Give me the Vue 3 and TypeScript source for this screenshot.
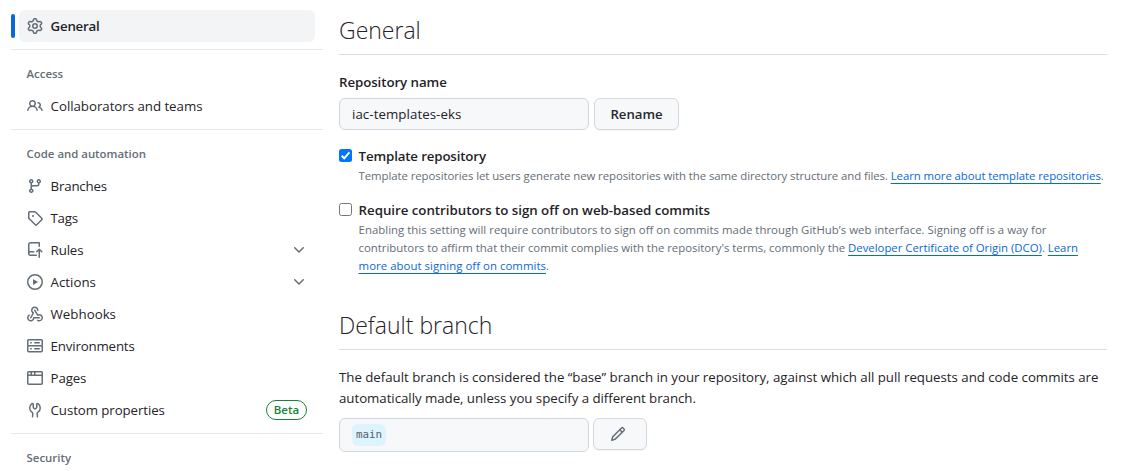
<script setup lang="ts">
interface NavItem {
  label: string
  icon: string
  fit: string
  expandable?: boolean
  badge?: string
}
interface NavSection {
  title: string
  fit: string
  items: NavItem[]
}

const gear = 'M8 0a8.2 8.2 0 0 1 .701.031C9.444.095 9.99.645 10.16 1.29l.288 1.107c.018.066.079.158.212.224.231.114.454.243.668.386.123.082.233.09.299.071l1.103-.303c.644-.176 1.392.021 1.82.63.27.385.506.792.704 1.218.315.675.111 1.422-.364 1.891l-.814.806c-.049.048-.098.147-.088.294.016.257.016.515 0 .772-.01.147.038.246.088.294l.814.806c.475.469.679 1.216.364 1.891a7.977 7.977 0 0 1-.704 1.217c-.428.61-1.176.807-1.82.63l-1.102-.302c-.067-.019-.177-.011-.3.071a5.909 5.909 0 0 1-.668.386c-.133.066-.194.158-.211.224l-.29 1.106c-.168.646-.715 1.196-1.458 1.26a8.006 8.006 0 0 1-1.402 0c-.743-.064-1.289-.614-1.458-1.26l-.289-1.106c-.018-.066-.079-.158-.212-.224a5.738 5.738 0 0 1-.668-.386c-.123-.082-.233-.09-.299-.071l-1.103.303c-.644.176-1.392-.021-1.82-.63a8.12 8.12 0 0 1-.704-1.218c-.315-.675-.111-1.422.363-1.891l.815-.806c.05-.048.098-.147.088-.294a6.214 6.214 0 0 1 0-.772c.01-.147-.038-.246-.088-.294l-.815-.806C.635 6.045.431 5.298.746 4.623a7.92 7.92 0 0 1 .704-1.217c.428-.61 1.176-.807 1.82-.63l1.102.302c.067.019.177.011.3-.071.214-.143.437-.272.668-.386.133-.066.194-.158.211-.224l.29-1.106C6.009.645 6.556.095 7.299.03 7.53.01 7.764 0 8 0Zm-.571 1.525c-.036.003-.108.036-.137.146l-.289 1.105c-.147.561-.549.967-.998 1.189-.173.086-.34.183-.5.29-.417.278-.97.423-1.529.27l-1.103-.303c-.109-.03-.175.016-.195.045-.22.312-.412.644-.573.99-.014.031-.021.11.059.19l.815.806c.411.406.562.957.53 1.456a4.709 4.709 0 0 0 0 .582c.032.499-.119 1.05-.53 1.456l-.815.806c-.081.08-.073.159-.059.19.162.346.353.677.573.989.02.03.085.076.195.046l1.102-.303c.56-.153 1.113-.008 1.53.27.161.107.328.204.501.29.447.222.85.629.997 1.189l.289 1.105c.029.109.101.143.137.146a6.6 6.6 0 0 0 1.142 0c.036-.003.108-.036.137-.146l.289-1.105c.147-.561.549-.967.998-1.189.173-.086.34-.183.5-.29.417-.278.97-.423 1.529-.27l1.103.303c.109.029.175-.016.195-.045.22-.313.411-.644.573-.99.014-.031.021-.11-.059-.19l-.815-.806c-.411-.406-.562-.957-.53-1.456a4.709 4.709 0 0 0 0-.582c-.032-.499.119-1.05.53-1.456l.815-.806c.081-.08.073-.159.059-.19a6.464 6.464 0 0 0-.573-.989c-.02-.03-.085-.076-.195-.046l-1.102.303c-.56.153-1.113.008-1.53-.27a4.44 4.44 0 0 0-.501-.29c-.447-.222-.85-.629-.997-1.189l-.289-1.105c-.029-.11-.101-.143-.137-.146a6.6 6.6 0 0 0-1.142 0ZM11 8a3 3 0 1 1-6 0 3 3 0 0 1 6 0ZM9.5 8a1.5 1.5 0 1 0-3.001.001A1.5 1.5 0 0 0 9.5 8Z'
const people = 'M2 5.5a3.5 3.5 0 1 1 5.898 2.549 5.508 5.508 0 0 1 3.034 4.084.75.75 0 1 1-1.482.235 4 4 0 0 0-7.9 0 .75.75 0 0 1-1.482-.236A5.507 5.507 0 0 1 3.102 8.05 3.493 3.493 0 0 1 2 5.5ZM11 4a3.001 3.001 0 0 1 2.22 5.018 5.01 5.01 0 0 1 2.56 3.012.749.749 0 0 1-.885.954.752.752 0 0 1-.549-.514 3.507 3.507 0 0 0-2.522-2.372.75.75 0 0 1-.574-.73v-.352a.75.75 0 0 1 .416-.672A1.5 1.5 0 0 0 11 5.5.75.75 0 0 1 11 4Zm-5.5-.5a2 2 0 1 0-.001 3.999A2 2 0 0 0 5.5 3.5Z'
const branch = 'M9.5 3.25a2.25 2.25 0 1 1 3 2.122V6A2.5 2.5 0 0 1 10 8.5H6a1 1 0 0 0-1 1v1.128a2.251 2.251 0 1 1-1.5 0V5.372a2.25 2.25 0 1 1 1.5 0v1.836A2.493 2.493 0 0 1 6 7h4a1 1 0 0 0 1-1v-.628A2.25 2.25 0 0 1 9.5 3.25Zm-6 0a.75.75 0 1 0 1.5 0 .75.75 0 0 0-1.5 0Zm8.25-.75a.75.75 0 1 0 0 1.5.75.75 0 0 0 0-1.5ZM4.25 12a.75.75 0 1 0 0 1.5.75.75 0 0 0 0-1.5Z'
const tag = 'M1 7.775V2.75C1 1.784 1.784 1 2.75 1h5.025c.464 0 .91.184 1.238.513l6.25 6.25a1.75 1.75 0 0 1 0 2.474l-5.026 5.026a1.75 1.75 0 0 1-2.474 0l-6.25-6.25A1.752 1.752 0 0 1 1 7.775Zm1.5 0c0 .066.026.13.073.177l6.25 6.25a.25.25 0 0 0 .354 0l5.025-5.025a.25.25 0 0 0 0-.354l-6.25-6.25a.25.25 0 0 0-.177-.073H2.75a.25.25 0 0 0-.25.25ZM6 5a1 1 0 1 1 0 2 1 1 0 0 1 0-2Z'
const repoPush = 'M1 2.5A2.5 2.5 0 0 1 3.5 0h8.75a.75.75 0 0 1 .75.75v3.5a.75.75 0 0 1-1.5 0V1.5h-8a1 1 0 0 0-1 1v6.708A2.493 2.493 0 0 1 3.5 9h3.25a.75.75 0 0 1 0 1.5H3.5a1 1 0 0 0 0 2h5.75a.75.75 0 0 1 0 1.5H3.5A2.5 2.5 0 0 1 1 11.5Zm13.23 7.79h-.001l-1.224-1.224v6.184a.75.75 0 0 1-1.5 0V9.066L10.28 10.29a.75.75 0 0 1-1.06-1.061l2.505-2.504a.75.75 0 0 1 1.06 0L15.29 9.23a.751.751 0 0 1-.018 1.042.751.751 0 0 1-1.042.018Z'
const play = 'M8 0a8 8 0 1 1 0 16A8 8 0 0 1 8 0ZM1.5 8a6.5 6.5 0 1 0 13 0 6.5 6.5 0 0 0-13 0Zm4.879-2.773 4.264 2.559a.25.25 0 0 1 0 .428l-4.264 2.559A.25.25 0 0 1 6 10.559V5.442a.25.25 0 0 1 .379-.215Z'
const webhook = 'M5.5 4.25a2.25 2.25 0 0 1 4.5 0 .75.75 0 0 0 1.5 0 3.75 3.75 0 1 0-6.14 2.889l-2.272 4.258a.75.75 0 0 0 1.324.706L7 7.25a.75.75 0 0 0-.309-1.015A2.25 2.25 0 0 1 5.5 4.25Z M7.364 3.607a.75.75 0 0 1 1.03.257l2.608 4.349a3.75 3.75 0 1 1-.628 6.785.75.75 0 0 1 .752-1.299 2.25 2.25 0 1 0-.033-3.88.75.75 0 0 1-1.03-.256L7.107 4.636a.75.75 0 0 1 .257-1.03Z M2.9 8.776A.75.75 0 0 1 2.625 9.8 2.25 2.25 0 1 0 6 11.75a.75.75 0 0 1 .75-.751h5.5a.75.75 0 0 1 0 1.5H7.425a3.751 3.751 0 1 1-5.55-3.998.75.75 0 0 1 1.024.274Z'
const server = 'M1.75 1h12.5c.966 0 1.75.784 1.75 1.75v4c0 .372-.116.717-.314 1 .198.283.314.628.314 1v4a1.75 1.75 0 0 1-1.75 1.75H1.75A1.75 1.75 0 0 1 0 12.75v-4c0-.358.109-.707.314-1a1.739 1.739 0 0 1-.314-1v-4C0 1.784.784 1 1.75 1ZM1.5 2.75v4c0 .138.112.25.25.25h12.5a.25.25 0 0 0 .25-.25v-4a.25.25 0 0 0-.25-.25H1.75a.25.25 0 0 0-.25.25Zm.25 5.75a.25.25 0 0 0-.25.25v4c0 .138.112.25.25.25h12.5a.25.25 0 0 0 .25-.25v-4a.25.25 0 0 0-.25-.25ZM7 4.75A.75.75 0 0 1 7.75 4h4.5a.75.75 0 0 1 0 1.5h-4.5A.75.75 0 0 1 7 4.75ZM7.75 10h4.5a.75.75 0 0 1 0 1.5h-4.5a.75.75 0 0 1 0-1.5ZM3 4.75A.75.75 0 0 1 3.75 4h.5a.75.75 0 0 1 0 1.5h-.5A.75.75 0 0 1 3 4.75ZM3.75 10h.5a.75.75 0 0 1 0 1.5h-.5a.75.75 0 0 1 0-1.5Z'
const browser = 'M0 2.75C0 1.784.784 1 1.75 1h12.5c.966 0 1.75.784 1.75 1.75v10.5A1.75 1.75 0 0 1 14.25 15H1.75A1.75 1.75 0 0 1 0 13.25ZM14.5 6h-13v7.25c0 .138.112.25.25.25h12.5a.25.25 0 0 0 .25-.25Zm-6-3.5v2h6V2.75a.25.25 0 0 0-.25-.25ZM5 2.5v2h2v-2Zm-3.25 0a.25.25 0 0 0-.25.25V4.5h2v-2Z'
const tools = 'M5.433 2.304A4.492 4.492 0 0 0 3.5 6c0 1.598.832 3.002 2.09 3.802.518.328.929.923.902 1.64v.008l-.164 3.337a.75.75 0 1 1-1.498-.073l.163-3.33c.002-.085-.05-.216-.207-.316A5.996 5.996 0 0 1 2 6a5.993 5.993 0 0 1 2.567-4.92 1.482 1.482 0 0 1 1.673-.04c.462.296.76.827.76 1.423v2.82c0 .082.041.16.11.206l.75.51a.25.25 0 0 0 .28 0l.75-.51A.249.249 0 0 0 9 5.282V2.463c0-.596.298-1.127.76-1.423a1.482 1.482 0 0 1 1.673.04A5.993 5.993 0 0 1 14 6a5.996 5.996 0 0 1-2.786 5.068c-.157.1-.209.23-.207.315l.163 3.33a.752.752 0 0 1-1.094.714.75.75 0 0 1-.404-.64l-.164-3.345c-.027-.717.384-1.312.902-1.64A4.495 4.495 0 0 0 12.5 6a4.492 4.492 0 0 0-1.933-3.696c-.024.017-.067.067-.067.16v2.818a1.75 1.75 0 0 1-.767 1.448l-.75.51a1.75 1.75 0 0 1-1.966 0l-.75-.51A1.75 1.75 0 0 1 5.5 5.282V2.463c0-.092-.043-.142-.067-.159Z'
const chevron = 'M12.78 5.22a.749.749 0 0 1 0 1.06l-4.25 4.25a.749.749 0 0 1-1.06 0L3.22 6.28a.749.749 0 1 1 1.06-1.06L8 8.939l3.72-3.719a.749.749 0 0 1 1.06 0Z'
const pencil = 'M11.013 1.427a1.75 1.75 0 0 1 2.474 0l1.086 1.086a1.75 1.75 0 0 1 0 2.474l-8.61 8.61c-.21.21-.47.364-.756.445l-3.251.93a.75.75 0 0 1-.927-.928l.929-3.25c.081-.286.235-.547.445-.758l8.61-8.61Zm.176 4.823L9.75 4.81l-6.286 6.287a.253.253 0 0 0-.064.108l-.558 1.953 1.953-.558a.253.253 0 0 0 .108-.064Zm1.238-3.763a.25.25 0 0 0-.354 0L10.811 3.75l1.439 1.44 1.263-1.263a.25.25 0 0 0 0-.354Z'

const sections: NavSection[] = [
  {
    title: 'Access',
    fit: 'fit-access',
    items: [{ label: 'Collaborators and teams', icon: people, fit: 'fit-collab' }],
  },
  {
    title: 'Code and automation',
    fit: 'fit-code',
    items: [
      { label: 'Branches', icon: branch, fit: 'fit-branches' },
      { label: 'Tags', icon: tag, fit: 'fit-tags' },
      { label: 'Rules', icon: repoPush, fit: 'fit-rules', expandable: true },
      { label: 'Actions', icon: play, fit: 'fit-actions', expandable: true },
      { label: 'Webhooks', icon: webhook, fit: 'fit-webhooks' },
      { label: 'Environments', icon: server, fit: 'fit-env' },
      { label: 'Pages', icon: browser, fit: 'fit-pages' },
      { label: 'Custom properties', icon: tools, fit: 'fit-custom', badge: 'Beta' },
    ],
  },
  { title: 'Security', fit: 'fit-security', items: [] },
]
</script>

<template>
  <div class="page">
    <nav class="sidebar">
      <a class="item active">
        <svg class="icon" viewBox="0 0 16 16"><path :d="gear" /></svg>
        <span class="fit-general">General</span>
      </a>
      <section v-for="s in sections" :key="s.title" class="group">
        <h3 class="group-title"><span :class="s.fit">{{ s.title }}</span></h3>
        <a v-for="i in s.items" :key="i.label" class="item">
          <svg class="icon" viewBox="0 0 16 16"><path :d="i.icon" /></svg>
          <span :class="i.fit">{{ i.label }}</span>
          <svg v-if="i.expandable" class="icon trailing" viewBox="0 0 16 16"><path :d="chevron" /></svg>
          <span v-if="i.badge" class="badge trailing">{{ i.badge }}</span>
        </a>
      </section>
    </nav>

    <main class="content">
      <h2 class="heading"><span class="fit-h-general">General</span></h2>
      <label class="field-label"><span class="fit-reponame">Repository name</span></label>
      <div class="row">
        <div class="input"><span class="fit-iac">iac-templates-eks</span></div>
        <button class="btn rename">Rename</button>
      </div>

      <div class="option first">
        <span class="check checked">
          <svg viewBox="0 0 13 13"><path d="M2.7 6.8 5.2 9.3 10.4 3.4" /></svg>
        </span>
        <div class="option-body">
          <div class="option-title"><span class="fit-template">Template repository</span></div>
          <p class="note">
            <span class="line fit-n1">Template repositories let users generate new repositories with the same directory structure and files. <a class="link">Learn more about template repositories</a>.</span>
          </p>
        </div>
      </div>
      <div class="option">
        <span class="check"></span>
        <div class="option-body">
          <div class="option-title"><span class="fit-require">Require contributors to sign off on web-based commits</span></div>
          <p class="note">
            <span class="line fit-n2">Enabling this setting will require contributors to sign off on commits made through GitHub’s web interface. Signing off is a way for</span>
            <span class="line fit-n3">contributors to affirm that their commit complies with the repository's terms, commonly the <a class="link">Developer Certificate of Origin (DCO)</a>. <a class="link">Learn</a></span>
            <span class="line fit-n4"><a class="link">more about signing off on commits</a>.</span>
          </p>
        </div>
      </div>

      <h2 class="heading second"><span class="fit-h-default">Default branch</span></h2>
      <p class="body-text">
        <span class="line fit-b1">The default branch is considered the “base” branch in your repository, against which all pull requests and code commits are</span>
        <span class="line fit-b2">automatically made, unless you specify a different branch.</span>
      </p>
      <div class="row branch-row">
        <div class="input branch-input"><code class="branch">main</code></div>
        <button class="btn edit"><svg class="icon" viewBox="0 0 16 16"><path :d="pencil" /></svg></button>
      </div>
    </main>
  </div>
</template>

<style>
body {
  margin: 0;
  background: #fff;
}
</style>

<style scoped>
.page {
  display: flex;
  height: 471px;
  overflow: hidden;
  box-sizing: border-box;
  padding-left: 11px;
  font-family: "Open Sans", "Noto Sans", sans-serif;
  font-size: 13.3px;
  color: #1f2328;
  white-space: nowrap;
}
.sidebar {
  flex: none;
  width: 312px;
  margin-right: 16px;
  padding-top: 10px;
}
.item {
  display: flex;
  align-items: center;
  height: 32px;
  margin: 0 8px;
  padding: 0 8px;
  box-sizing: border-box;
}
.active {
  position: relative;
  background: #f3f4f6;
  border-radius: 6px;
  font-weight: 600;
}
.active::before {
  content: "";
  position: absolute;
  left: -8px;
  top: 4px;
  width: 4px;
  height: 24px;
  border-radius: 6px;
  background: #0969da;
}
.icon {
  width: 16px;
  height: 16px;
  flex: none;
  margin-right: 7.6px;
  fill: #656d76;
}
.trailing {
  margin-left: auto;
  margin-right: 0;
}
.badge {
  width: 41px;
  height: 20px;
  box-sizing: border-box;
  border: 1px solid #1a7f37;
  border-radius: 10px;
  color: #1a7f37;
  font-size: 11.5px;
  font-weight: 600;
  line-height: 18px;
  text-align: center;
}
.group {
  margin-top: 7px;
  padding-top: 8px;
  border-top: 1px solid #e6e8eb;
}
.group-title {
  margin: 0;
  padding-left: 15.6px;
  font-size: 11.4px;
  font-weight: 600;
  line-height: 32px;
  color: #656d76;
}
.content {
  width: 768px;
  flex: none;
}
.heading {
  margin: 0;
  height: 54px;
  border-bottom: 1px solid #d8dee4;
  font-size: 23px;
  font-weight: 300;
  line-height: 60px;
}
.second {
  margin-top: 20px;
}
.field-label {
  display: block;
  margin-top: 17px;
  height: 26px;
  line-height: 20px;
  font-weight: 600;
}
.row {
  display: flex;
  align-items: flex-start;
}
.input {
  width: 250px;
  height: 32px;
  box-sizing: border-box;
  padding: 0 12px;
  border: 1px solid #d0d7de;
  border-radius: 6px;
  background: #f6f8fa;
  line-height: 30px;
}
.btn {
  height: 32px;
  padding: 0;
  border: 1px solid #d5d8dc;
  border-radius: 6px;
  background: #f6f8fa;
  box-shadow: 0 1px 0 rgba(31, 35, 40, 0.04);
  color: #24292f;
  font-family: inherit;
  font-size: 13.2px;
  font-weight: 600;
}
.rename {
  width: 85px;
  margin-left: 5px;
}
.option {
  display: flex;
  margin-top: 15px;
}
.first {
  margin-top: 16px;
}
.check {
  flex: none;
  width: 13px;
  height: 13px;
  box-sizing: border-box;
  margin: 3px 6.6px 0 0;
  border: 1px solid #767676;
  border-radius: 2.5px;
  background: #fff;
}
.checked {
  border: 0;
  background: #0075ff;
}
.check svg {
  display: block;
  width: 13px;
  height: 13px;
  fill: none;
  stroke: #fff;
  stroke-width: 2;
}
.option-title {
  height: 21px;
  line-height: 21px;
  font-weight: 600;
}
.note {
  margin: 0;
  font-size: 11.4px;
  line-height: 18px;
  color: #656d76;
}
.line {
  display: block;
  width: max-content;
}
.link {
  color: #0969da;
  text-decoration: underline;
  text-decoration-thickness: 1px;
  text-decoration-skip-ink: none;
  text-underline-offset: 3px;
}
.body-text {
  margin: 17px 0 0;
  line-height: 21px;
}
.branch-row {
  margin-top: 9px;
}
.branch-input {
  height: 34px;
}
.branch {
  display: inline-block;
  height: 22px;
  margin-top: 5px;
  padding: 0 4px;
  border-radius: 6px;
  background: #ddf4ff;
  color: #57606a;
  font-family: "DejaVu Sans Mono", monospace;
  font-size: 10.8px;
  line-height: 21px;
  vertical-align: top;
}
.edit {
  display: flex;
  align-items: center;
  width: 54px;
  margin-left: 4px;
  padding-left: 16px;
}

/* Tracking per label */
.fit-general { letter-spacing: -0.25px; }
.fit-collab { letter-spacing: -0.04px; }
.fit-branches { letter-spacing: -0.2px; }
.fit-tags { letter-spacing: -0.3px; }
.fit-rules { letter-spacing: -0.15px; }
.fit-env { letter-spacing: -0.18px; }
.fit-pages { letter-spacing: -0.15px; }
.fit-custom { letter-spacing: -0.1px; }
.fit-iac { letter-spacing: 0.06px; }
.fit-reponame { letter-spacing: -0.08px; }
.fit-template { letter-spacing: -0.15px; }
.fit-require { letter-spacing: -0.03px; }
.fit-n1 { letter-spacing: -0.075px; }
.fit-n2 { letter-spacing: 0.018px; }
.fit-n3 { letter-spacing: -0.02px; }
.fit-n4 { letter-spacing: 0.04px; }
.fit-b1 { letter-spacing: -0.032px; }
.fit-b2 { letter-spacing: -0.05px; }
</style>
